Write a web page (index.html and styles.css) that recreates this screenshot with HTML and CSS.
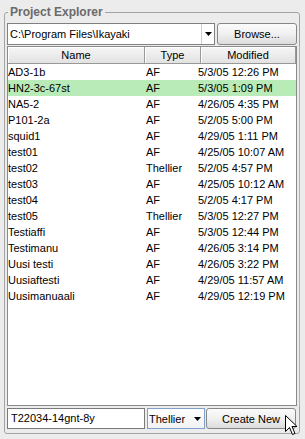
FILE: index.html
```html
<!DOCTYPE html>
<html>
<head>
<meta charset="utf-8">
<link rel="stylesheet" href="styles.css">
</head>
<body>
<fieldset class="explorer">
  <legend class="title">Project Explorer</legend>
  <div class="path-row">
    <div class="combo path-combo">
      <span class="combo-text">C:\Program Files\Ikayaki</span>
      <span class="combo-arrow"><svg width="7" height="4" viewBox="0 0 7 4"><path d="M0 0H7L3.5 4Z" fill="#000"/></svg></span>
    </div>
    <button class="btn browse">Browse...</button>
  </div>
  <div class="table">
    <div class="thead">
      <div class="th th-name">Name</div>
      <div class="th th-type">Type</div>
      <div class="th th-mod">Modified</div>
    </div>
    <div class="tbody">
      <div class="row"><span>AD3-1b</span><span>AF</span><span>5/3/05 12:26 PM</span></div>
      <div class="row selected"><span>HN2-3c-67st</span><span>AF</span><span>5/3/05 1:09 PM</span></div>
      <div class="row"><span>NA5-2</span><span>AF</span><span>4/26/05 4:35 PM</span></div>
      <div class="row"><span>P101-2a</span><span>AF</span><span>5/2/05 5:00 PM</span></div>
      <div class="row"><span>squid1</span><span>AF</span><span>4/29/05 1:11 PM</span></div>
      <div class="row"><span>test01</span><span>AF</span><span>4/25/05 10:07 AM</span></div>
      <div class="row"><span>test02</span><span>Thellier</span><span>5/2/05 4:57 PM</span></div>
      <div class="row"><span>test03</span><span>AF</span><span>4/25/05 10:12 AM</span></div>
      <div class="row"><span>test04</span><span>AF</span><span>5/2/05 4:17 PM</span></div>
      <div class="row"><span>test05</span><span>Thellier</span><span>5/3/05 12:27 PM</span></div>
      <div class="row"><span>Testiaffi</span><span>AF</span><span>5/3/05 12:44 PM</span></div>
      <div class="row"><span>Testimanu</span><span>AF</span><span>4/26/05 3:14 PM</span></div>
      <div class="row"><span>Uusi testi</span><span>AF</span><span>4/26/05 3:22 PM</span></div>
      <div class="row"><span>Uusiaftesti</span><span>AF</span><span>4/29/05 11:57 AM</span></div>
      <div class="row"><span>Uusimanuaali</span><span>AF</span><span>4/29/05 12:19 PM</span></div>
    </div>
  </div>
  <div class="new-row">
    <div class="field">T22034-14gnt-8y</div>
    <div class="combo type-combo">
      <span class="combo-text">Thellier</span>
      <span class="combo-arrow"><svg width="7" height="4" viewBox="0 0 7 4"><path d="M0 0H7L3.5 4Z" fill="#000"/></svg></span>
    </div>
    <button class="btn create">Create New</button>
  </div>
</fieldset>
<svg class="cursor" width="13" height="21" viewBox="0 0 13 21">
  <path d="M0.5 0.5V16.5L4.5 12.5L7.5 19.5L10 18.5L7 11.5H12Z" fill="#fff" stroke="#000" stroke-width="1" stroke-linejoin="miter"/>
</svg>
</body>
</html>
```

FILE: styles.css
```css
html, body {
  margin: 0;
  background: #ececec;
}
body {
  padding-top: 5px;
  font-family: "Liberation Sans", Arial, sans-serif;
  font-size: 11px;
  color: #000;
  position: relative;
  height: 434px;
  overflow: hidden;
}
.explorer {
  margin: 0 5px 0 4px;
  border: 1px solid #a4a4a4;
  border-radius: 3px;
  padding: 4px 2px 4px 2px;
  min-width: 0;
}
.title {
  font-size: 12px;
  font-weight: bold;
  line-height: 14px;
  color: #6a6a6a;
  padding: 0 2px;
  margin-left: 1px;
}
.path-row {
  display: flex;
  gap: 2px;
  height: 22px;
}
.combo {
  display: flex;
  align-items: center;
  background: #fff;
  border: 1px solid #808080;
  box-sizing: border-box;
}
.combo-text {
  flex: 1;
  padding-left: 2px;
  white-space: nowrap;
  overflow: hidden;
}
.combo-arrow {
  width: 12px;
  height: 100%;
  display: flex;
  align-items: center;
  justify-content: center;
  border-left: 1px solid #d0d0d0;
}
.path-combo {
  width: 208px;
  height: 22px;
}
.btn {
  font-family: "Liberation Sans", Arial, sans-serif;
  font-size: 11px;
  color: #000;
  padding: 0;
  border: 1px solid #878787;
  border-radius: 3px;
  background: linear-gradient(#fbfbfb, #f0f0f0 50%, #dcdcdc);
  box-sizing: border-box;
}
.browse {
  width: 80px;
  height: 22px;
}
.table {
  margin-top: 1px;
  height: 360px;
  border: 1px solid #8a8a8a;
  box-shadow: 2px 0 0 #ececec, 3px 0 0 #b4b4b4;
  background: #fff;
  box-sizing: border-box;
  display: flex;
  flex-direction: column;
}
.thead {
  display: grid;
  grid-template-columns: 137px 56px 1fr;
  height: 17px;
}
.th {
  background: linear-gradient(#f6f6f6, #e2e2e2);
  border-right: 1px solid #999;
  border-bottom: 1px solid #999;
  box-shadow: inset 1px 1px 0 #fff;
  text-align: center;
  line-height: 16px;
}
.th-mod {
  border-right: 1px solid #999;
}
.tbody {
  flex: 1;
}
.row {
  display: grid;
  grid-template-columns: 138px 52px 1fr;
  height: 16px;
  line-height: 16px;
  white-space: nowrap;
}
.row.selected {
  background: #b9ebb9;
}
.new-row {
  display: flex;
  margin-top: 2px;
  height: 21px;
}
.field {
  width: 138px;
  background: #fff;
  border: 1px solid #7b7b7b;
  box-sizing: border-box;
  padding-left: 3px;
  line-height: 19px;
  white-space: nowrap;
}
.type-combo {
  margin-left: 2px;
  width: 58px;
  height: 21px;
  border-color: #7fa0cc;
  background: linear-gradient(#ffffff, #f2f2f2);
}
.type-combo .combo-text {
  padding-left: 1px;
}
.type-combo .combo-arrow {
  border-left: none;
  width: 14px;
}
.create {
  margin-left: 1px;
  width: 90px;
  height: 21px;
}
.cursor {
  position: absolute;
  left: 285px;
  top: 415px;
}
```
